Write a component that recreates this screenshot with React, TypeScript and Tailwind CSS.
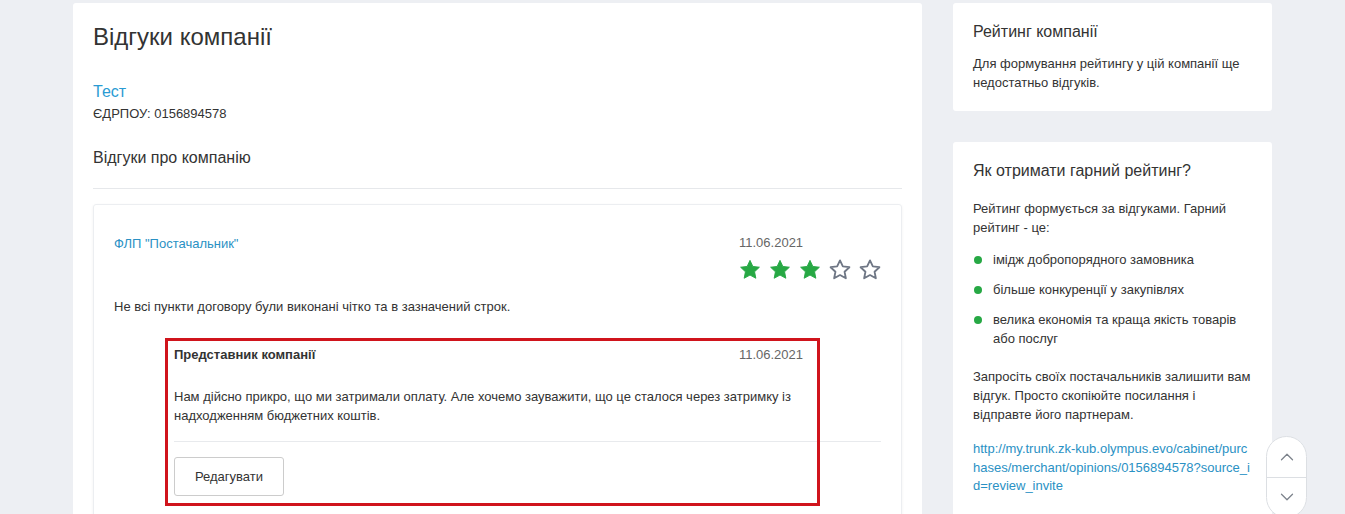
import { ChevronDown, ChevronUp } from "lucide-react";

function Star({ filled }: { filled: boolean }) {
  return (
    <svg width="22" height="21" viewBox="0 0 24 23" className="shrink-0">
      <path
        d="M12 1.5l3.1 6.6 7.2.9-5.3 5 1.4 7.1L12 17.6l-6.4 3.5 1.4-7.1-5.3-5 7.2-.9z"
        fill={filled ? "#27a844" : "none"}
        stroke={filled ? "#27a844" : "#6f7785"}
        strokeWidth={filled ? 1 : 2}
        strokeLinejoin="round"
      />
    </svg>
  );
}

function Bullet({ children }: { children: React.ReactNode }) {
  return (
    <li className="flex items-start gap-[11px]">
      <span className="mt-[6px] h-[8px] w-[8px] shrink-0 rounded-full bg-[#27a844]" />
      <span>{children}</span>
    </li>
  );
}

export default function App() {
  return (
    <div
      className="min-h-[514px] bg-[#edeff3] text-[#333]"
      style={{ fontFamily: '"Liberation Sans", Arial, sans-serif' }}
    >
      <div className="flex items-start gap-[31px] pl-[73px] pt-[3px]">
        {/* Main column */}
        <main className="w-[849px] shrink-0 rounded-[3px] bg-white px-[20px] pt-[19px] pb-[40px]">
          <h1 className="text-[24px] leading-[30px]">Відгуки компанії</h1>

          <div className="mt-[30px]">
            <a className="block text-[16px] leading-[20px] text-[#2a9bd3]">Тест</a>
            <div className="mt-[4px] text-[13px] leading-[16px]">ЄДРПОУ: 0156894578</div>
          </div>

          <h2 className="mt-[26px] text-[16px] leading-[20px]">Відгуки про компанію</h2>
          <div className="mt-[20px] border-t border-[#e6e8eb]" />

          {/* Review */}
          <div className="mt-[15px] rounded-[3px] border border-[#eceef1] px-[20px] pt-[30px] pb-[40px] shadow-[0_1px_3px_rgba(0,0,0,0.06)]">
            <div className="flex items-start justify-between">
              <a className="mt-[1px] text-[13px] leading-[16px] text-[#2a91c4]">ФЛП "Постачальник"</a>
              <div className="flex flex-col">
                <span className="text-[13px] leading-[16px] text-[#666]">11.06.2021</span>
                <div className="mt-[8px] flex gap-[8px]">
                  <Star filled />
                  <Star filled />
                  <Star filled />
                  <Star filled={false} />
                  <Star filled={false} />
                </div>
              </div>
            </div>

            <p className="mt-[18px] text-[13px] leading-[18px]">
              Не всі пункти договору були виконані чітко та в зазначений строк.
            </p>

            {/* Company reply */}
            <div className="relative ml-[60px] mt-[31px]">
              <div className="w-[629px]">
                <div className="flex items-center justify-between">
                  <span className="text-[13px] font-bold leading-[16px]">Представник компанії</span>
                  <span className="text-[13px] leading-[16px] text-[#666]">11.06.2021</span>
                </div>
                <p className="mt-[24px] text-[13px] leading-[19px]">
                  Нам дійсно прикро, що ми затримали оплату. Але хочемо зауважити, що це сталося через затримку із
                  надходженням бюджетних коштів.
                </p>
              </div>
              <div className="mt-[16px] border-t border-[#e8eaed]" />
              <button className="mt-[15px] h-[39px] w-[110px] rounded-[3px] border border-[#ccc] bg-white text-[13px] text-[#333]">
                Редагувати
              </button>

              {/* highlight overlay */}
              <div className="pointer-events-none absolute left-[-9px] top-[-9px] h-[168px] w-[655px] border-[3px] border-[#d0141c]" />
            </div>
          </div>
        </main>

        {/* Sidebar */}
        <aside className="flex w-[319px] shrink-0 flex-col gap-[31px]">
          <section className="rounded-[3px] bg-white px-[20px] pt-[19px] pb-[19px]">
            <h3 className="text-[16px] leading-[20px]">Рейтинг компанії</h3>
            <p className="mt-[12px] text-[13px] leading-[19px]">
              Для формування рейтингу у цій компанії ще недостатньо відгуків.
            </p>
          </section>

          <section className="rounded-[3px] bg-white px-[20px] pt-[19px] pb-[30px]">
            <h3 className="text-[16px] leading-[20px]">Як отримати гарний рейтинг?</h3>
            <p className="mt-[18px] text-[13px] leading-[19px]">
              Рейтинг формується за відгуками. Гарний рейтинг - це:
            </p>
            <ul className="mt-[13px] flex flex-col gap-[11px] pl-[1px] text-[13px] leading-[19px]">
              <Bullet>імідж добропорядного замовника</Bullet>
              <Bullet>більше конкуренції у закупівлях</Bullet>
              <Bullet>велика економія та краща якість товарів або послуг</Bullet>
            </ul>
            <p className="mt-[19px] text-[13px] leading-[19px]">
              Запросіть своїх постачальників залишити вам відгук. Просто скопіюйте посилання і відправте його партнерам.
            </p>
            <a className="mt-[16px] block break-all text-[13px] leading-[18.5px] text-[#2a91c4]">
              http://my.trunk.zk-kub.olympus.evo/cabinet/purchases/merchant/opinions/0156894578?source_id=review_invite
            </a>
          </section>
        </aside>
      </div>

      {/* Scroll buttons */}
      <div className="fixed left-[1266px] top-[436px] flex h-[82px] w-[41px] flex-col overflow-hidden rounded-full border border-[#dcdfe3] bg-white">
        <button className="flex flex-1 items-center justify-center text-[#7d838c]">
          <ChevronUp size={22} strokeWidth={1.4} />
        </button>
        <div className="border-t border-[#dcdfe3]" />
        <button className="flex flex-1 items-center justify-center text-[#7d838c]">
          <ChevronDown size={22} strokeWidth={1.4} />
        </button>
      </div>
    </div>
  );
}
